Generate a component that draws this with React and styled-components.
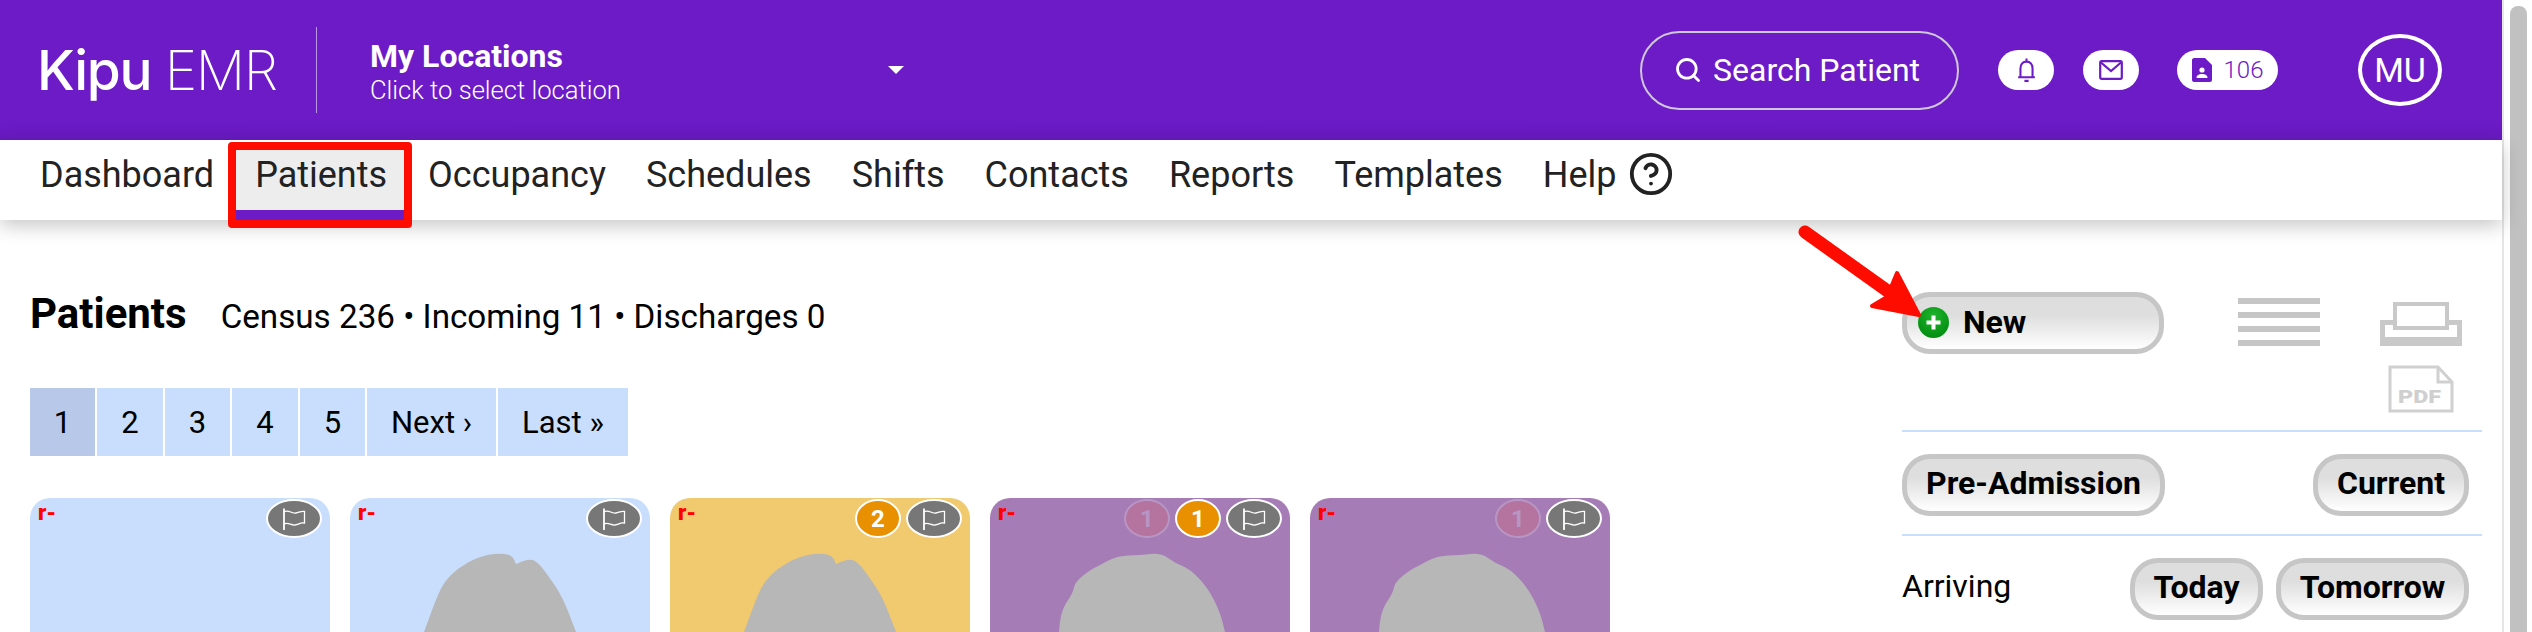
import React from 'react';
import styled, { createGlobalStyle } from 'styled-components';
import { Search, CircleHelp } from 'lucide-react';

const purple = '#6c1bc6';

const GlobalStyle = createGlobalStyle`
    html, body {
        margin: 0;
        padding: 0;
        background: #fff;
    }
    * {
        box-sizing: border-box;
    }
`;

const Page = styled.div`
    position: relative;
    display: flex;
    width: 2532px;
    height: 632px;
    overflow: hidden;
    font-family: Roboto, "Liberation Sans", sans-serif;
    color: #000;
`;

const Content = styled.div`
    width: 2502px;
    display: flex;
    flex-direction: column;
`;

const ScrollTrack = styled.div`
    width: 30px;
    background: #fff;
    border-left: 2px solid #e6e6e6;
    padding: 6px 5px 0 6px;
`;

const ScrollThumb = styled.div`
    height: 700px;
    border-radius: 8px;
    background: #c1c1c1;
`;

const Header = styled.header`
    height: 140px;
    flex: none;
    display: flex;
    align-items: center;
    padding: 0 60px 0 37px;
    background: linear-gradient(${purple} 85%, #681ac0);
    color: #fff;
`;

const Logo = styled.div`
    width: 279px;
    font-family: Inter, Roboto, sans-serif;
    font-size: 55px;
    letter-spacing: -1.3px;
    font-weight: 500;
    line-height: 60px;
    white-space: nowrap;

    span {
        font-weight: 200;
    }
`;

const HeaderDivider = styled.div`
    width: 1px;
    height: 86px;
    background: rgba(255, 255, 255, 0.55);
`;

const LocationBlock = styled.div`
    width: 518px;
    margin-left: 53px;
    padding-top: 3px;
`;

const LocationTitle = styled.div`
    font-size: 32px;
    font-weight: 700;
    line-height: 36px;
`;

const LocationHint = styled.div`
    font-size: 25.6px;
    font-weight: 300;
    line-height: 32px;
`;

const Caret = styled.div`
    width: 0;
    height: 0;
    border-left: 8px solid transparent;
    border-right: 8px solid transparent;
    border-top: 8px solid #fff;
`;

const HeaderRight = styled.div`
    margin-left: auto;
    display: flex;
    align-items: center;
`;

const SearchPill = styled.div`
    width: 319px;
    height: 79px;
    display: flex;
    align-items: center;
    gap: 11px;
    padding-left: 32px;
    border: 2px solid #cfc7dc;
    border-radius: 40px;
    font-size: 32px;
`;

const IconPill = styled.div`
    width: ${(p) => p.$width}px;
    height: 40px;
    margin-left: ${(p) => p.$gap}px;
    display: flex;
    align-items: center;
    justify-content: center;
    gap: 12px;
    background: #fff;
    border-radius: 20px;
    color: ${purple};
    font-size: 24px;
    font-weight: 300;
`;

const Avatar = styled.div`
    width: 84px;
    height: 72px;
    margin-left: 80px;
    display: flex;
    align-items: center;
    justify-content: center;
    border: 4px solid #fff;
    border-radius: 50%;
    font-size: 34px;
    font-weight: 400;
`;

const Nav = styled.nav`
    position: relative;
    z-index: 2;
    height: 80px;
    flex: none;
    display: flex;
    align-items: flex-start;
    padding-left: 20px;
    background: #fff;
    box-shadow: 0 6px 18px rgba(0, 0, 0, 0.22);
`;

const NavItem = styled.a`
    position: relative;
    height: 70px;
    margin: 10px ${(p) => (p.$active ? '4px' : '0')} 0 ${(p) => (p.$active ? '1px' : '0')};
    padding: 0 ${(p) => (p.$active ? '17px' : '20px')} 0 20px;
    display: flex;
    align-items: flex-start;
    gap: 11px;
    font-size: 36px;
    line-height: 50px;
    color: #222;
    background: ${(p) => (p.$active ? '#ededee' : 'transparent')};
    border-bottom: ${(p) => (p.$active ? `10px solid ${purple}` : 'none')};

    svg {
        margin-top: 1px;
    }

    /* red annotation box drawn on the screenshot */
    ${(p) => p.$active && `
        &::after {
            content: '';
            position: absolute;
            inset: -8px -8px -18px -7px;
            border: 8px solid #fe0c00;
            border-radius: 4px;
        }
    `}
`;

const Main = styled.main`
    flex: 1;
    display: flex;
    min-height: 0;
`;

const LeftColumn = styled.div`
    flex: 1;
    padding: 68px 0 0 30px;
    min-width: 0;
`;

const TitleRow = styled.div`
    display: flex;
    align-items: baseline;
    height: 52px;
`;

const Title = styled.h1`
    margin: 0;
    font-size: 42px;
    font-weight: 700;
    line-height: 52px;
`;

const Stats = styled.div`
    margin-left: 34px;
    font-size: 33.2px;
`;

const Pager = styled.div`
    display: flex;
    gap: 2px;
    margin-top: 48px;
`;

const PageLink = styled.a`
    width: ${(p) => p.$width}px;
    height: 68px;
    display: flex;
    align-items: center;
    justify-content: center;
    background: ${(p) => (p.$current ? '#b7c8e8' : '#c9defc')};
    font-size: 31px;
`;

const Cards = styled.div`
    display: flex;
    gap: 20px;
    margin-top: 42px;
`;

const Card = styled.div`
    position: relative;
    width: 300px;
    height: 160px;
    flex: none;
    padding: 4px 8px;
    background: ${(p) => p.$color};
    border-radius: 20px 20px 0 0;
`;

const Mark = styled.span`
    position: relative;
    z-index: 1;
    color: #f00;
    font-size: 22px;
    font-weight: 900;
    line-height: 22px;
`;

const Silhouette = styled.svg`
    position: absolute;
    left: 0;
    top: 0;
    width: 300px;
    height: 134px;
`;

const BadgeRow = styled.div`
    position: absolute;
    z-index: 1;
    top: 1px;
    right: 8px;
    display: flex;
    gap: 5px;
`;

const Badge = styled.div`
    width: ${(p) => (p.$flag ? 56 : 46)}px;
    height: 39px;
    display: flex;
    align-items: center;
    justify-content: center;
    border: 2px solid #fff;
    border-radius: 50%;
    background: ${(p) => (p.$flag ? '#777' : '#e99000')};
    color: #fff;
    font-size: 24px;
    font-weight: 700;
    opacity: ${(p) => (p.$faded ? 0.2 : 1)};
    ${(p) => p.$faded && 'background: #f0504a;'}
`;

const Sidebar = styled.aside`
    width: 580px;
    flex: none;
    margin-right: 20px;
    padding-top: 72px;
`;

const SideRow = styled.div`
    display: flex;
    align-items: ${(p) => p.$align || 'center'};
    justify-content: ${(p) => p.$justify || 'space-between'};
    padding: ${(p) => p.$padding || '22px 13px 18px 0'};
    border-bottom: ${(p) => (p.$line ? '2px solid #c9defc' : 'none')};
`;

const PillButton = styled.button`
    width: ${(p) => p.$width}px;
    height: 62px;
    display: flex;
    align-items: center;
    justify-content: ${(p) => (p.$icon ? 'flex-start' : 'center')};
    gap: 14px;
    padding: 0 0 ${(p) => (p.$icon ? '2px' : '4px')} ${(p) => (p.$icon ? '11px' : '0')};
    border: 5px solid #c6c6c6;
    border-radius: 28px;
    background: linear-gradient(#dedede 35%, #fff 100%);
    font-family: inherit;
    font-size: 32px;
    font-weight: 700;
    color: #000;
`;

const ButtonPair = styled.div`
    display: flex;
    gap: 13px;
`;

const Arriving = styled.div`
    font-size: 32px;
    padding-bottom: 6px;
`;

const ListIcon = styled.div`
    width: 82px;
    height: 48px;
    margin-top: 6px;
    margin-left: 74px;
    display: flex;
    flex-direction: column;
    justify-content: space-between;
`;

const ListBar = styled.div`
    height: 6px;
    background: #c6c6c6;
`;

const PrintColumn = styled.div`
    width: 82px;
    margin-left: 60px;
    margin-top: 10px;
    display: flex;
    flex-direction: column;
    align-items: center;
    gap: 19px;
`;

const ArrowOverlay = styled.svg`
    position: absolute;
    z-index: 3;
    left: 1795px;
    top: 225px;
`;

const BellIcon = () => (
    <svg width="19" height="25" viewBox="0 0 18 24" fill="none" stroke={purple} strokeWidth="2">
        <path d="M9 0.5V3.5M3.2 18V10C3.2 6 5.5 3.5 9 3.5S14.8 6 14.8 10V18M1 18.5H17" />
        <path d="M7 22H11" strokeWidth="2.2" />
    </svg>
);

const MailIcon = () => (
    <svg width="24" height="20" viewBox="0 0 24 20" fill="none" stroke={purple} strokeWidth="2.2">
        <rect x="1.2" y="1.2" width="21.6" height="17.6" rx="1.5" />
        <path d="M2 2.5L12 11L22 2.5" />
    </svg>
);

const PatientDocIcon = () => (
    <svg width="20" height="24" viewBox="0 0 20 24">
        <path fill={purple} d="M2 0H13L20 7V22C20 23 19 24 18 24H2C1 24 0 23 0 22V2C0 1 1 0 2 0Z" />
        <circle cx="10" cy="12" r="2.6" fill="#fff" />
        <path fill="#fff" d="M4.5 20C4.5 17 7 16 10 16S15.5 17 15.5 20Z" />
    </svg>
);

const FlagIcon = () => (
    <svg width="26" height="24" viewBox="0 0 26 24" fill="none" stroke="#fff">
        <path d="M3 1.5V23" strokeWidth="1.8" />
        <path d="M3 5C8 2 10 7 15 6C18 5.5 20 4 23.5 4.5V16C19 15 18 17.5 14 18C10 18.5 7 15 3 17" strokeWidth="1.3" />
    </svg>
);

const PlusIcon = () => (
    <svg width="31" height="31" viewBox="0 0 31 31">
        <defs>
            <radialGradient id="plus-green" cx="50%" cy="30%" r="75%">
                <stop offset="0%" stopColor="#1fb32c" />
                <stop offset="100%" stopColor="#008a0e" />
            </radialGradient>
        </defs>
        <circle cx="15.5" cy="15.5" r="15.5" fill="url(#plus-green)" />
        <path d="M15.5 8.5V22.5M8.5 15.5H22.5" stroke="#fff" strokeWidth="4" />
    </svg>
);

const PrinterIcon = () => (
    <svg width="82" height="44" viewBox="0 0 82 44">
        <path fill="#c9c9c9" fillRule="evenodd" d="M0 18H82V44H0ZM5 23V35H77V23Z" />
        <rect x="15" y="2" width="52" height="24" fill="#fff" stroke="#c9c9c9" strokeWidth="4" />
    </svg>
);

const PdfIcon = () => (
    <svg width="66" height="48" viewBox="0 0 66 48" fill="none" stroke="#d0d0d0" strokeWidth="3">
        <path d="M2 2H50L64 17V46H2Z" />
        <path d="M50 2V17H64" />
        <text x="10" y="38" fill="#cfcfcf" stroke="none" fontFamily="Roboto, sans-serif" fontWeight="900" fontSize="19" textLength="43" lengthAdjust="spacingAndGlyphs">PDF</text>
    </svg>
);

// rounds the traced outline, a repeated point keeps a hard corner
const smoothPath = (points) => {
    let d = `M${points[0][0]} ${points[0][1]}`;
    for (let i = 1; i < points.length - 1; i++) {
        const [x, y] = points[i];
        const [nx, ny] = points[i + 1];
        d += `Q${x} ${y} ${(x + nx) / 2} ${(y + ny) / 2}`;
    }
    const last = points[points.length - 1];
    return `${d}L${last[0]} ${last[1]}Z`;
};

const blobA = smoothPath([[74, 134], [83, 109], [93, 85], [108, 70], [128, 59], [147, 55], [162, 57], [166, 66], [166, 66], [178, 61], [187, 63], [200, 80], [213, 100], [226, 134]]);
const blobB = smoothPath([[69, 134], [70, 114], [83, 95], [85, 84], [100, 72], [110, 67], [127, 58], [150, 57], [171, 55], [185, 65], [200, 71], [218, 90], [230, 114], [235, 134]]);

const navLinks = ['Dashboard', 'Patients', 'Occupancy', 'Schedules', 'Shifts', 'Contacts', 'Reports', 'Templates'];

const pages = [
    { label: '1', width: 65, current: true },
    { label: '2', width: 66 },
    { label: '3', width: 65 },
    { label: '4', width: 66 },
    { label: '5', width: 65 },
    { label: 'Next ›', width: 129 },
    { label: 'Last »', width: 130 },
];

const cards = [
    { color: '#c9defc', badges: [] },
    { color: '#c9defc', blob: blobA, badges: [] },
    { color: '#f1c96f', blob: blobA, badges: [{ text: '2' }] },
    { color: '#a67cb6', blob: blobB, badges: [{ text: '1', faded: true }, { text: '1' }] },
    { color: '#a67cb6', blob: blobB, badges: [{ text: '1', faded: true }] },
];

const PatientCard = ({ color, blob, badges }) => (
    <Card $color={color}>
        <Mark>r-</Mark>
        {blob && (
            <Silhouette viewBox="0 0 300 134">
                <path d={blob} fill="#b7b7b7" />
            </Silhouette>
        )}
        <BadgeRow>
            {badges.map((badge, i) => (
                <Badge key={i} $faded={badge.faded}>{badge.text}</Badge>
            ))}
            <Badge $flag><FlagIcon /></Badge>
        </BadgeRow>
    </Card>
);

export default function App() {
    return (
        <Page>
            <GlobalStyle />
            <Content>
                <Header>
                    <Logo>Kipu <span>EMR</span></Logo>
                    <HeaderDivider />
                    <LocationBlock>
                        <LocationTitle>My Locations</LocationTitle>
                        <LocationHint>Click to select location</LocationHint>
                    </LocationBlock>
                    <Caret />
                    <HeaderRight>
                        <SearchPill>
                            <Search size={28} strokeWidth={2.4} />
                            Search Patient
                        </SearchPill>
                        <IconPill $width={56} $gap={39}><BellIcon /></IconPill>
                        <IconPill $width={56} $gap={29}><MailIcon /></IconPill>
                        <IconPill $width={101} $gap={38}><PatientDocIcon />106</IconPill>
                        <Avatar>MU</Avatar>
                    </HeaderRight>
                </Header>
                <Nav>
                    {navLinks.map((link) => (
                        <NavItem key={link} $active={link === 'Patients'}>{link}</NavItem>
                    ))}
                    <NavItem>Help <CircleHelp size={46} strokeWidth={2} /></NavItem>
                </Nav>
                <Main>
                    <LeftColumn>
                        <TitleRow>
                            <Title>Patients</Title>
                            <Stats>Census 236 • Incoming 11 • Discharges 0</Stats>
                        </TitleRow>
                        <Pager>
                            {pages.map((page) => (
                                <PageLink key={page.label} $width={page.width} $current={page.current}>{page.label}</PageLink>
                            ))}
                        </Pager>
                        <Cards>
                            {cards.map((card, i) => (
                                <PatientCard key={i} {...card} />
                            ))}
                        </Cards>
                    </LeftColumn>
                    <Sidebar>
                        <SideRow $line $align="flex-start" $justify="flex-start" $padding="0 0 17px">
                            <PillButton $width={262} $icon><PlusIcon />New</PillButton>
                            <ListIcon>
                                <ListBar />
                                <ListBar />
                                <ListBar />
                                <ListBar />
                            </ListIcon>
                            <PrintColumn>
                                <PrinterIcon />
                                <PdfIcon />
                            </PrintColumn>
                        </SideRow>
                        <SideRow $line>
                            <PillButton $width={263}>Pre-Admission</PillButton>
                            <PillButton $width={156}>Current</PillButton>
                        </SideRow>
                        <SideRow>
                            <Arriving>Arriving</Arriving>
                            <ButtonPair>
                                <PillButton $width={133}>Today</PillButton>
                                <PillButton $width={193}>Tomorrow</PillButton>
                            </ButtonPair>
                        </SideRow>
                    </Sidebar>
                </Main>
            </Content>
            <ScrollTrack>
                <ScrollThumb />
            </ScrollTrack>
            <ArrowOverlay width="130" height="95" viewBox="0 0 130 95">
                <path d="M10 7L108 77" stroke="#fe0c00" strokeWidth="13" strokeLinecap="round" />
                <path d="M102 48L124 90L77 81L92 72Z" fill="#fe0c00" stroke="#fe0c00" strokeWidth="4" strokeLinejoin="round" />
            </ArrowOverlay>
        </Page>
    );
}
